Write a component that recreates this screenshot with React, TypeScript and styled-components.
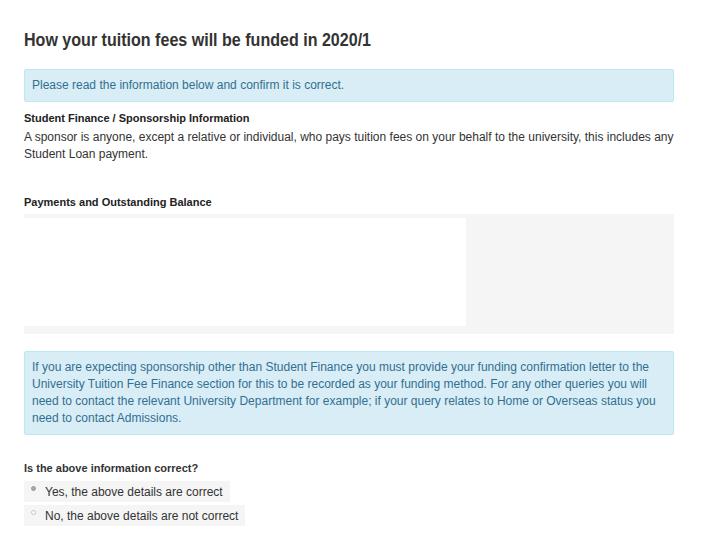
import React from "react";
import styled, { createGlobalStyle } from "styled-components";

const Global = createGlobalStyle`
  html, body { margin: 0; padding: 0; background: #fff; }
  body { font-family: "Liberation Sans", Arial, sans-serif; color: #333; }
`;

const Page = styled.div`
  width: 650px;
  padding: 30px 0 0 24px;
  display: flex;
  flex-direction: column;
`;

const Heading = styled.h1`
  margin: 0 0 19px;
  font-family: "Liberation Sans Narrow", "Liberation Sans", Arial, sans-serif;
  font-weight: 700;
  font-size: 18px;
  line-height: 20px;
  color: #333;
  transform: scaleX(0.892);
  transform-origin: left center;
  white-space: nowrap;
`;

const Alert = styled.div<{ $mb: number }>`
  box-sizing: border-box;
  background: #d9edf7;
  border: 1px solid #bce8f1;
  border-radius: 2px;
  color: #31708f;
  font-size: 12px;
  line-height: 17px;
  padding: 7px 7px;
  margin-bottom: ${(p) => p.$mb}px;
`;

const Label = styled.div<{ $mb: number; $mt?: number }>`
  font-family: "Liberation Sans Narrow", "Liberation Sans", Arial, sans-serif;
  font-weight: 700;
  font-size: 11px;
  line-height: 15px;
  color: #222;
  margin-top: ${(p) => p.$mt ?? 0}px;
  margin-bottom: ${(p) => p.$mb}px;
`;

const Question = styled.div`
  font-weight: 700;
  font-size: 11px;
  line-height: 15px;
  color: #333;
  margin-bottom: 5px;
`;

const Paragraph = styled.p`
  margin: 3px 0 0;
  font-size: 12px;
  line-height: 17px;
  color: #333;
`;

const Panel = styled.div`
  margin-top: 4px;
  height: 120px;
  background: #f5f5f5;
  padding: 4px 0 8px;
  box-sizing: border-box;
  display: flex;
  margin-bottom: 17px;
`;

const PanelInner = styled.div`
  width: 442px;
  background: #fff;
`;

const Options = styled.div`
  display: flex;
  flex-direction: column;
  align-items: flex-start;
  gap: 3px;
`;

const Option = styled.label`
  display: flex;
  align-items: center;
  gap: 9px;
  height: 21px;
  padding: 0 7px 0 7px;
  background: #f5f5f5;
  font-size: 12px;
  color: #333;
`;

const Dot = styled.span<{ $checked?: boolean }>`
  width: 5px;
  height: 5px;
  border-radius: 50%;
  box-sizing: border-box;
  margin-top: -6px;
  border: 1px solid ${(p) => (p.$checked ? "#9a9a9a" : "#c4c4c4")};
  background: ${(p) => (p.$checked ? "#a8a8a8" : "#fff")};
`;

export default function App() {
  return (
    <>
      <Global />
      <Page>
        <Heading>How your tuition fees will be funded in 2020/1</Heading>
        <Alert $mb={9}>Please read the information below and confirm it is correct.</Alert>
        <Label $mb={0}>Student Finance / Sponsorship Information</Label>
        <Paragraph>
          A sponsor is anyone, except a relative or individual, who pays tuition fees on your behalf to the
          university, this includes any Student Loan payment.
        </Paragraph>
        <Label $mt={32} $mb={0}>Payments and Outstanding Balance</Label>
        <Panel>
          <PanelInner />
        </Panel>
        <Alert $mb={26}>
          If you are expecting sponsorship other than Student Finance you must provide your funding confirmation
          letter to the University Tuition Fee Finance section for this to be recorded as your funding method. For
          any other queries you will need to contact the relevant University Department for example; if your query
          relates to Home or Overseas status you need to contact Admissions.
        </Alert>
        <Question>Is the above information correct?</Question>
        <Options>
          <Option>
            <Dot $checked />
            Yes, the above details are correct
          </Option>
          <Option>
            <Dot />
            No, the above details are not correct
          </Option>
        </Options>
      </Page>
    </>
  );
}
